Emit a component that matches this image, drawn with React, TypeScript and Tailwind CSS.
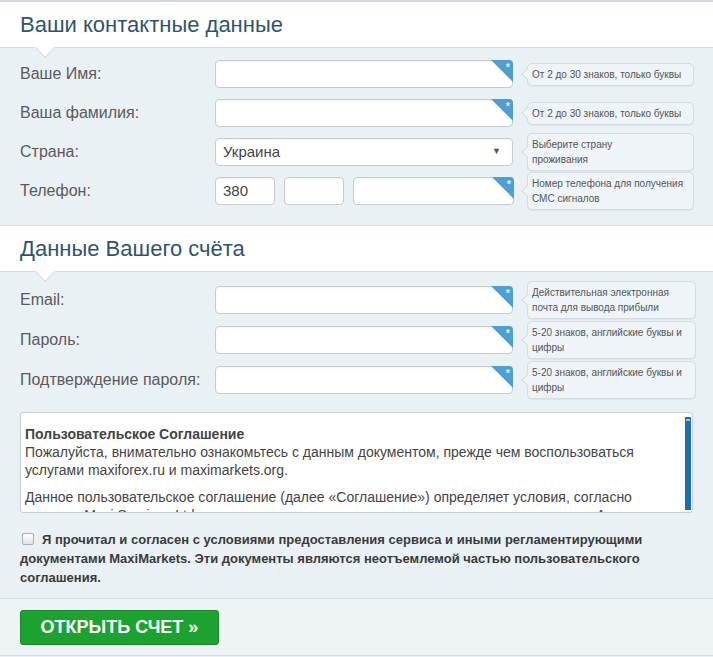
import type { ReactNode } from "react";

const font = { fontFamily: '"Liberation Sans", Arial, sans-serif' };

function SectionHeader({ title }: { title: string }) {
  return (
    <div className="relative border-y border-[#d3dbe0] bg-white h-[47px] flex items-center px-5">
      <h2 className="text-[22px] text-[#2c566e] leading-none">{title}</h2>
      <div className="absolute left-[38px] -bottom-[8px] h-[14px] w-[14px] rotate-45 border-r border-b border-[#d3dbe0] bg-white" />
    </div>
  );
}

function Corner() {
  return (
    <div className="absolute right-[-1px] top-[-1px] h-[22px] w-[22px] overflow-hidden rounded-tr-[4px]">
      <div className="absolute inset-0 bg-[#4d9fd3] [clip-path:polygon(0_0,100%_0,100%_100%)]" />
      <span className="absolute right-[3px] top-[-1px] text-[11px] text-[#dff0fb] font-bold">*</span>
    </div>
  );
}

function Field({ w = "w-[298px]", corner = true, children }: { w?: string; corner?: boolean; children?: ReactNode }) {
  return (
    <div className={`relative h-[28px] ${w} rounded-[4px] border border-[#c5cbce] bg-white shadow-[inset_0_1px_2px_rgba(0,0,0,0.06)] flex items-center px-[7px] text-[15px] text-[#444]`}>
      {children}
      {corner && <Corner />}
    </div>
  );
}

function Hint({ children, w = "w-[167px]" }: { children: ReactNode; w?: string }) {
  return (
    <div className={`relative shrink-0 ${w} rounded-[5px] border border-[#d4dce1] bg-[#eef4f7] px-[4px] py-[3px] text-[10px] leading-[15px] text-[#555] shadow-[0_1px_1px_rgba(0,0,0,0.05)]`}>
      <div className="absolute -left-[5px] top-1/2 -mt-[4px] h-[8px] w-[8px] rotate-45 border-l border-b border-[#d4dce1] bg-[#eef4f7]" />
      <span className="relative">{children}</span>
    </div>
  );
}

function Row({ label, field, hint }: { label: string; field: ReactNode; hint: ReactNode }) {
  return (
    <div className="flex h-[28px] items-center">
      <div className="w-[195px] shrink-0 whitespace-nowrap text-[16px] text-[#5a5a5a]">{label}</div>
      <div className="w-[312px] shrink-0">{field}</div>
      {hint}
    </div>
  );
}

export default function App() {
  return (
    <div style={font} className="w-[713px] h-[657px] overflow-hidden bg-[#e9f1f5]">
      <div className="border-t border-[#d3dbe0]">
        <SectionHeader title="Ваши контактные данные" />
      </div>
      <div className="px-5 pt-[12px] pb-[20px] flex flex-col gap-[11px]">
        <Row label="Ваше Имя:" field={<Field />} hint={<Hint>От 2 до 30 знаков, только буквы</Hint>} />
        <Row label="Ваша фамилия:" field={<Field />} hint={<Hint>От 2 до 30 знаков, только буквы</Hint>} />
        <Row
          label="Страна:"
          field={
            <Field corner={false}>
              <span className="flex-1">Украина</span>
              <span className="text-[9px] text-[#555] mr-[4px]">▼</span>
            </Field>
          }
          hint={<Hint>Выберите страну<br />проживания</Hint>}
        />
        <Row
          label="Телефон:"
          field={
            <div className="flex gap-[9px]">
              <Field w="w-[60px]" corner={false}>380</Field>
              <Field w="w-[60px]" corner={false} />
              <Field w="w-[161px]" />
            </div>
          }
          hint={<Hint>Номер телефона для получения<br />СМС сигналов</Hint>}
        />
      </div>

      <SectionHeader title="Данные Вашего счёта" />
      <div className="px-5 pt-[14px] flex flex-col gap-[12px]">
        <Row label="Email:" field={<Field />} hint={<Hint w="w-[169px]">Действительная электронная почта для вывода прибыли</Hint>} />
        <Row label="Пароль:" field={<Field />} hint={<Hint w="w-[169px]">5-20 знаков, английские буквы и цифры</Hint>} />
        <Row label="Подтверждение пароля:" field={<Field />} hint={<Hint w="w-[169px]">5-20 знаков, английские буквы и цифры</Hint>} />
      </div>

      <div className="mx-5 mt-[18px] relative h-[101px] rounded-[3px] border border-[#c9d0d4] bg-white overflow-hidden">
        <div className="px-[4px] pt-[12px] pr-[14px] text-[14px] leading-[18px] text-[#444]">
          <div className="font-bold">Пользовательское Соглашение</div>
          <p>
            Пожалуйста, внимательно ознакомьтесь с данным документом, прежде чем воспользоваться услугами
            maxiforex.ru и maximarkets.org.
          </p>
          <p className="mt-[9px]">
            Данное пользовательское соглашение (далее «Соглашение») определяет условия, согласно которым Maxi
            Services Ltd., международная компания, зарегистрированная на острове Ангилья
          </p>
        </div>
        <div className="absolute right-[1px] top-[4px] bottom-[2px] w-[6px] bg-[#1c6fae]">
          <div className="mx-[1px] mt-[2px] h-[2px] bg-[#9cc7e6]" />
        </div>
      </div>

      <div className="px-5 pt-[17px] pb-[11px] border-b border-[#d3dbe0] text-[13px] leading-[19px] font-bold text-[#3a3a3a]">
        <span className="inline-block align-[-1px] mr-[8px] ml-[2px] h-[12px] w-[12px] rounded-[2px] border border-[#a9b0b4] bg-gradient-to-b from-white to-[#dfe3e6]" />
        Я прочитал и согласен с условиями предоставления сервиса и иными регламентирующими документами
        MaxiMarkets. Эти документы являются неотъемлемой частью пользовательского соглашения.
      </div>

      <div className="bg-[#eef3f6] px-5 pt-[11px] pb-[10px] border-b border-[#d3dbe0]">
        <button className="h-[35px] w-[199px] rounded-[3px] border border-[#168a26] bg-[#1ba22f] text-[18px] font-bold text-white">
          ОТКРЫТЬ СЧЕТ »
        </button>
      </div>
    </div>
  );
}
